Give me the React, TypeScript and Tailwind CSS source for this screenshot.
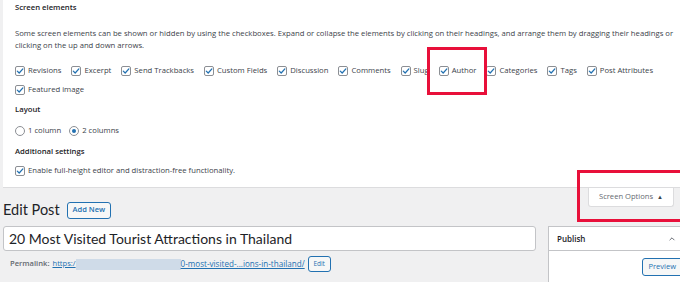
import React from "react";

const Check = () => (
  <span className="inline-flex h-[10px] w-[10px] shrink-0 items-center justify-center rounded-[2px] border border-[#8c8f94] bg-white">
    <svg viewBox="0 0 10 10" className="h-[8px] w-[8px]">
      <path d="M1.6 5.2 L4 7.5 L8.6 2.4" fill="none" stroke="#2271b1" strokeWidth="1.6" strokeLinecap="round" strokeLinejoin="round" />
    </svg>
  </span>
);

const Item = ({ label }: { label: string }) => (
  <span className="flex items-center gap-[3px] whitespace-nowrap">
    <Check />
    <span>{label}</span>
  </span>
);

const Radio = ({ on }: { on?: boolean }) => (
  <span className="inline-flex h-[10px] w-[10px] shrink-0 items-center justify-center rounded-full border border-[#8c8f94] bg-white">
    {on && <span className="h-[4px] w-[4px] rounded-full bg-[#2271b1]" />}
  </span>
);

export default function App() {
  return (
    <div className="relative h-[282px] w-[680px] overflow-hidden bg-[#f0f0f1] text-[#3c434a]" style={{ fontFamily: '"Open Sans", "Noto Sans", sans-serif' }}>
      <div className="w-[760px]">
        {/* Screen options panel */}
        <div className="ml-[3px] h-[188px] border-b border-[#dcdcde] bg-white pl-[12px] pt-[2px] text-[7.7px] leading-[11px]">
          <div className="h-[12px] font-semibold text-[#1d2327]">Screen elements</div>
          <p className="mt-[14px] whitespace-nowrap leading-[11.5px]">
            Some screen elements can be shown or hidden by using the checkboxes. Expand or collapse the elements by clicking on their headings, and arrange them by dragging their headings or
            <br />
            clicking on the up and down arrows.
          </p>
          <div className="mt-[14px] flex gap-x-[10px]">
            {["Revisions", "Excerpt", "Send Trackbacks", "Custom Fields", "Discussion", "Comments", "Slug", "Author", "Categories", "Tags", "Post Attributes"].map((l) => (
              <Item key={l} label={l} />
            ))}
          </div>
          <div className="mt-[8px] flex">
            <Item label="Featured image" />
          </div>
          <div className="mt-[9px] font-semibold text-[#1d2327]">Layout</div>
          <div className="mt-[10px] flex gap-x-[8px]">
            <span className="flex items-center gap-[3px]"><Radio /> 1 column</span>
            <span className="flex items-center gap-[3px]"><Radio on /> 2 columns</span>
          </div>
          <div className="mt-[10px] font-semibold text-[#1d2327]">Additional settings</div>
          <div className="mt-[8px] flex">
            <Item label="Enable full-height editor and distraction-free functionality." />
          </div>
        </div>

        {/* Heading row */}
        <div className="flex items-start justify-between">
          <div className="flex items-center gap-[7px] pl-[3px] pt-[12px]">
            <h1 className="text-[14.5px] leading-[20px] text-[#1d2327]" style={{ fontFamily: "Lato, sans-serif" }}>Edit Post</h1>
            <span className="flex h-[17px] items-center rounded-[3px] border border-[#2271b1] bg-[#f6f7f7] px-[5px] text-[7.5px] font-semibold text-[#2271b1]">Add New</span>
          </div>
          <div className="mr-[86px] flex h-[19px] w-[86px] items-center justify-center gap-[4px] rounded-b-[3px] border border-t-0 border-[#dcdcde] bg-white text-[7.6px] text-[#646970]">
            Screen Options <span className="text-[6px] text-[#3c434a]">▲</span>
          </div>
        </div>

        {/* Body */}
        <div className="mt-[6px] flex gap-[12px] pl-[3px]">
          <div className="w-[533px]">
            <div className="flex h-[25px] items-center rounded-[3px] border border-[#c3c4c7] bg-white pl-[5px] text-[14px] text-[#1d2327]" style={{ fontFamily: "Lato, sans-serif" }}>
              20 Most Visited Tourist Attractions in Thailand
            </div>
            <div className="mt-[5px] flex items-center pl-[7px] text-[7.6px]">
              <span className="font-semibold text-[#646970]">Permalink:</span>
              <span className="ml-[3px] text-[#2271b1] underline">https:/</span>
              <span className="h-[11px] w-[105px] bg-[#cfdbe8]" />
              <span className="text-[8.1px] text-[#2271b1] underline">0-most-visited-...ions-in-thailand/</span>
              <span className="ml-[3px] flex h-[16px] w-[23px] items-center justify-center rounded-[3px] border border-[#2271b1] bg-[#f6f7f7] text-[6.5px] text-[#2271b1]">Edit</span>
            </div>
          </div>
          <div className="h-[60px] w-[171px] border border-[#c3c4c7] bg-white">
            <div className="flex h-[24px] items-center justify-between border-b border-[#c3c4c7] pl-[8px] pr-[42px]">
              <span className="text-[8px] font-semibold text-[#1d2327]">Publish</span>
              <svg viewBox="0 0 10 10" className="h-[8px] w-[8px]">
                <path d="M2 6.5 L5 3.5 L8 6.5" fill="none" stroke="#646970" strokeWidth="1.2" />
              </svg>
            </div>
            <div className="flex justify-end pr-[35px] pt-[7px]">
              <span className="flex h-[18px] items-center rounded-[3px] border border-[#2271b1] bg-[#f6f7f7] px-[6px] text-[7.5px] text-[#2271b1]">Preview</span>
            </div>
          </div>
        </div>
      </div>

      {/* Annotation boxes */}
      <div className="pointer-events-none absolute left-[427px] top-[47px] h-[48px] w-[60px] border-[3px] border-[#e8103a]" />
      <div className="pointer-events-none absolute left-[577px] top-[170px] h-[52px] w-[120px] border-[3px] border-[#e8103a]" />
    </div>
  );
}
